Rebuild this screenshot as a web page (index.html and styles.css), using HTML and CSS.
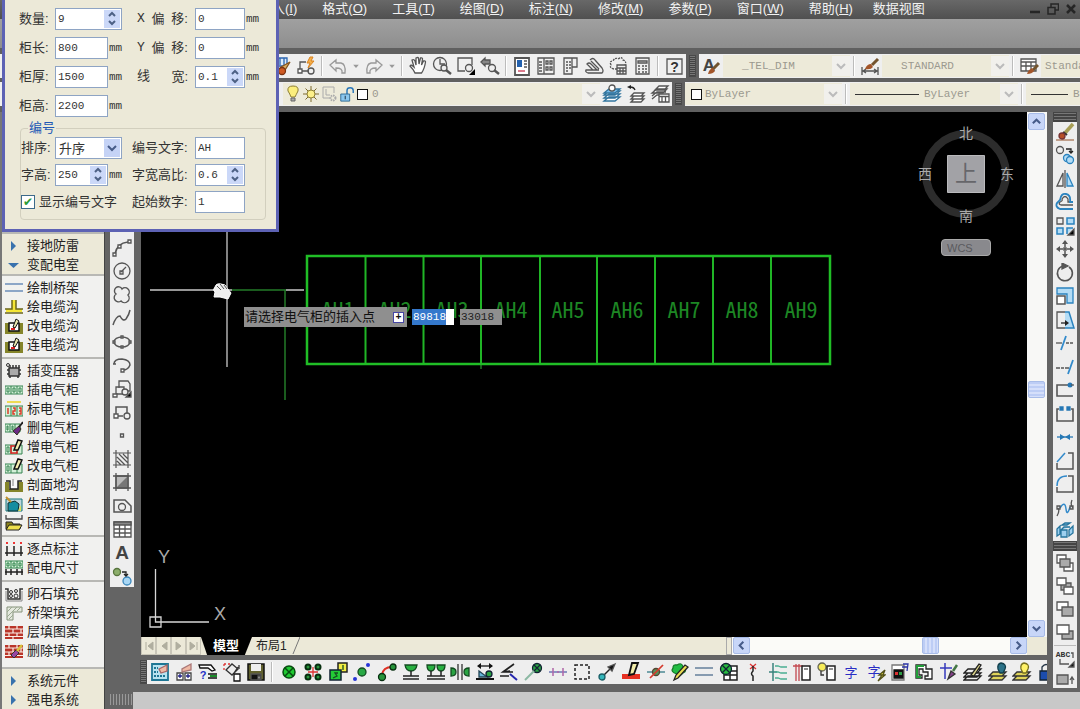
FILE: index.html
```html
<!DOCTYPE html>
<html lang="zh-CN">
<head>
<meta charset="utf-8">
<title>变配电室</title>
<link rel="stylesheet" href="styles.css">
</head>
<body>
<div class="app">
  <header class="menubar">
    <nav class="menus">
      <button>插入(<u>I</u>)</button><button>格式(<u>O</u>)</button><button>工具(<u>T</u>)</button><button>绘图(<u>D</u>)</button><button>标注(<u>N</u>)</button><button>修改(<u>M</u>)</button><button>参数(<u>P</u>)</button><button>窗口(<u>W</u>)</button><button>帮助(<u>H</u>)</button><button>数据视图</button>
    </nav>
    <div class="window-buttons">
      <button aria-label="最小化"><svg viewBox="0 0 12 12"><path d="M1 9h10" stroke-width="2.5"/></svg></button>
      <button aria-label="还原"><svg viewBox="0 0 12 12"><path d="M4 4V1h7.500v6H8M1 4.500h7v6.500H1z" stroke-width="1.500"/></svg></button>
      <button aria-label="关闭"><svg viewBox="0 0 12 12"><path d="M2 2l8 8M10 2l-8 8" stroke-width="2.500"/></svg></button>
    </div>
  </header>
  <div class="band"></div>

  <div class="toolrows">
    <div class="toolrow">
      <div class="bar bar-standard">
        <button aria-label="特性匹配"><svg viewBox="0 0 20 20"><path d="M4 2h11v8H4zM8 2v7M12 2v7" fill="#dcebfa" stroke="#2c66b0"/><path d="M9 11l9-5-5 8z" fill="#dcae62" stroke="#87561f"/><circle cx="10" cy="15" r="3.500" fill="#cf5a23" stroke="#7b3413"/></svg></button>
        <button aria-label="块编辑器"><svg viewBox="0 0 20 20"><path d="M10 6H4v9h9"/><circle cx="15" cy="15" r="3"/><path d="M2 13h4v4H2z" fill="#fff"/><path d="M14 1l-3 6h3l-2 5 6-7h-3l2-4z" fill="#f6b04b" stroke="#d98320" stroke-width="1"/></svg></button>
        <i class="sep"></i>
        <button aria-label="放弃"><svg viewBox="0 0 20 20"><path d="M2 9l6-5v3h5q5 1 4 10h-3q1-5-6-5v3z" stroke="#999"/></svg></button>
        <button class="drop" aria-label="放弃列表"><svg viewBox="0 0 20 20"><path d="M3 7h14l-7 8z" fill="#999" stroke="none"/></svg></button>
        <button aria-label="重做"><svg viewBox="0 0 20 20"><path d="M18 9l-6-5v3H7q-5 1-4 10h3q-1-5 6-5v3z" stroke="#999"/></svg></button>
        <button class="drop" aria-label="重做列表"><svg viewBox="0 0 20 20"><path d="M3 7h14l-7 8z" fill="#999" stroke="none"/></svg></button>
        <i class="sep"></i>
        <button aria-label="平移"><svg viewBox="0 0 20 20"><path d="M7 17q-1-3-5-7 1-2 4 1L4 4q2-1 3 1l1 4V2q2-1 2.500 0l.5 6 1.500-6q2-.500 2 1l-1 6 2-4q2-.500 2 1-1 7-4 11z" fill="#fff"/></svg></button>
        <button aria-label="实时缩放"><svg viewBox="0 0 20 20"><circle cx="8" cy="8" r="6.500"/><path d="M8 3v5h5"/><circle cx="12" cy="12" r="3" fill="#eee"/><path d="M14 14l5 4" stroke-width="2.500"/></svg></button>
        <button aria-label="窗口缩放"><svg viewBox="0 0 20 20"><path d="M9 15H2V2h14v7"/><circle cx="13" cy="12" r="3.500" fill="#eee"/><path d="M19 13v6h-6z" fill="#000" stroke="none"/></svg></button>
        <button aria-label="缩放上一个"><svg viewBox="0 0 20 20"><path d="M1 6l4-4v2h5v4H5v2z" fill="#888"/><circle cx="12" cy="12" r="3.500" fill="#eee"/><path d="M14 14l5 4" stroke-width="2.500"/></svg></button>
        <i class="sep"></i>
        <button aria-label="特性"><svg viewBox="0 0 20 20"><path d="M3 2h14v17H3z" fill="#fff" stroke-width="1.800"/><path d="M5 4h5v7H5z" fill="#2361ae" stroke="none"/><path d="M12 5h3M12 8h3M12 11h3"/><path d="M6 15h7" stroke="#ca3450"/></svg></button>
        <button aria-label="设计中心"><svg viewBox="0 0 20 20"><path d="M2 2h16v16H2zM8 2v16M3 6h3M3 9h3M3 12h3M3 15h3M10 5h2v3h-2zM14 5h2v3h-2zM10 11h2v3h-2zM14 11h2v3h-2z"/></svg></button>
        <button aria-label="工具选项板"><svg viewBox="0 0 20 20"><path d="M4 2h8v16H4zM12 2h5v9h-5M6 6h2M9 6h2M6 9h2M9 9h2M6 12h2M9 12h2M6 15h2"/></svg></button>
        <button aria-label="图纸集"><svg viewBox="0 0 20 20"><path d="M6 4q3-3 5 0l7 8q2 3 0 5H4q-3-1-2-3h7L3 8q2-2 4 0l6 6M7 5l8 8M9 14h6"/></svg></button>
        <button aria-label="标记集"><svg viewBox="0 0 20 20"><path d="M9 13H6q-5-1-3-4-2-4 2-4 2-4 5-2 4-3 5 1 4 1 2 5" stroke-dasharray="2 1"/><path d="M9 9h9v9H9zM9 12h9M12 12v6M15 12v6M9 15h9"/></svg></button>
        <button aria-label="计算器"><svg viewBox="0 0 20 20"><path d="M4 2h13v16H4zM6 5h9v2H6z"/><path d="M6 10h2M10 10h2M13 10h2M6 13h2M10 13h2M13 13h2M6 16h2M10 16h2M13 16h2"/></svg></button>
        <i class="sep"></i>
        <button aria-label="帮助"><svg viewBox="0 0 20 20"><path d="M3 3h15v15H3z"/><text x="10.500" y="16" class="glyph-q">?</text></svg></button>
      </div>
      <i class="grip"></i>
      <div class="bar bar-grow">
        <button aria-label="文字样式"><svg viewBox="0 0 20 20"><text x="8" y="15" class="glyph-a">A</text><path d="M18 7l-6 6" stroke="#73542e" stroke-width="3"/><path d="M7 18q1-5 5-6l2 3q-2 3-7 3z" fill="#a3552a" stroke="none"/></svg></button>
        <label class="combo combo-style"><select aria-label="文字样式"><option>_TEL_DIM</option></select><svg viewBox="0 0 12 12"><path d="M2 4l4 4 4-4"/></svg></label>
        <i class="sep"></i>
        <button aria-label="标注样式"><svg viewBox="0 0 20 20"><path d="M2 11v8M18 11v8M2 15h16M3 15l3-2M3 15l3 2M17 15l-3-2M17 15l-3 2"/><path d="M18 3l-6 6" stroke="#73542e" stroke-width="3"/><path d="M5 13q2-5 6-5l2 3q-2 3-8 2z" fill="#a3552a" stroke="none"/></svg></button>
        <label class="combo combo-style"><select aria-label="标注样式"><option>STANDARD</option></select><svg viewBox="0 0 12 12"><path d="M2 4l4 4 4-4"/></svg></label>
        <i class="sep"></i>
        <button aria-label="表格样式"><svg viewBox="0 0 20 20"><path d="M2 3h15v12H2zM2 6h15M2 10h15M7 6v9M12 6v9" fill="#fff"/><path d="M19 9l-5 5" stroke="#73542e" stroke-width="3"/><path d="M8 18q1-4 5-6l2 3q-2 3-7 3z" fill="#a3552a" stroke="none"/></svg></button>
        <label class="combo combo-table"><select aria-label="表格样式"><option>Standard</option></select></label>
      </div>
    </div>

    <div class="toolrow">
      <div class="bar bar-layer">
        <div class="combo combo-layer">
          <svg viewBox="0 0 16 18"><path d="M8 1q6 0 5 5-2 4-3 6H6Q5 9 3 6 2 1 8 1z" fill="#fbee7c" stroke="#8d7f34"/><path d="M6 13h4v3H6z" fill="#aaa"/></svg>
          <svg viewBox="0 0 16 18"><path d="M8 1v16M0 9h16M2.500 3.500l11 11M13.500 3.500l-11 11" stroke="#7d6b2e"/><circle cx="8" cy="9" r="4" fill="#fdf08a" stroke="#8d7f34"/></svg>
          <svg viewBox="0 0 16 18"><path d="M9 13H2V2h11v6M5 4v6h4" stroke="#aaa"/><circle cx="12" cy="13" r="2.500" stroke="#aaa" stroke-width="2" stroke-dasharray="1.500 .8"/></svg>
          <svg viewBox="0 0 18 18"><path d="M9 9V5q0-3 3.500-3T16 5v3" stroke="#2775b8" stroke-width="1.600"/><path d="M2 9h10v8H2z" fill="#8bc7ee" stroke="#28648f"/><path d="M7 11v4" stroke="#123"/></svg>
          <span class="swatch"></span>
          <select aria-label="图层"><option>0</option></select>
          <svg class="chev" viewBox="0 0 12 12"><path d="M2 4l4 4 4-4"/></svg>
        </div>
        <button aria-label="图层置为当前"><svg viewBox="0 0 20 20"><path d="M2 17l5-4h11l-5 4zM2 14l5-4h11l-5 4zM2 11l5-4h11l-5 4z" fill="#fff" stroke="#31749e"/><path d="M2 9l5-4h11l-5 4z" fill="#78bdec" stroke="#31749e"/><circle cx="10" cy="4" r="3" fill="#fff"/></svg></button>
        <button aria-label="上一个图层"><svg viewBox="0 0 20 20"><path d="M5 18l3-3h10l-3 3zM5 15l3-3h10l-3 3zM5 12l3-3h10l-3 3z" fill="#fff"/><path d="M9 6q-1-3-5-3" stroke="#222"/><path d="M1 3l4-2v4z" fill="#222" stroke="none"/></svg></button>
        <button aria-label="图层状态管理器"><svg viewBox="0 0 20 20"><path d="M2 15l5-4h8M2 12l5-4h9M2 9l5-4h10l-4 4zM5 6l4-4h9l-4 4z" fill="#fff"/><path d="M9 10h10v8H9zM9 12.500h10M12 13v5M15.500 13v5" fill="#fff"/></svg></button>
      </div>
      <i class="grip"></i>
      <div class="bar bar-grow">
        <label class="combo combo-color"><span class="swatch"></span><select aria-label="颜色"><option>ByLayer</option></select><svg viewBox="0 0 12 12"><path d="M2 4l4 4 4-4"/></svg></label>
        <i class="sep"></i>
        <label class="combo combo-line"><span class="rule"></span><select aria-label="线型"><option>ByLayer</option></select><svg viewBox="0 0 12 12"><path d="M2 4l4 4 4-4"/></svg></label>
        <i class="sep"></i>
        <label class="combo combo-weight"><span class="rule"></span><select aria-label="线宽"><option>ByLayer</option></select></label>
      </div>
    </div>
  </div>

  <div class="body">
    <aside class="sidebar">
      <ul class="cream first">
        <li><svg viewBox="0 0 18 16"><path d="M6 3l5 5-5 5z" fill="#3972ad"/></svg>接地防雷</li>
        <li><svg viewBox="0 0 18 16"><path d="M3 6h11l-5.500 5z" fill="#3972ad"/></svg>变配电室</li>
      </ul>
      <ul>
        <li><svg viewBox="0 0 18 16"><path d="M0 4h18M0 11h18" stroke="#6b8dbb" stroke-width="1.300"/></svg>绘制桥架</li>
        <li><svg viewBox="0 0 18 16"><path d="M7 1v9H1v3h16v-3h-6V1" fill="#f5e635"/><path d="M7 1v9H0M11 1v9h7M0 14h18" stroke="#6b651b" stroke-width="1.500"/></svg>绘电缆沟</li>
        <li><svg viewBox="0 0 18 16"><path d="M0 5h18v11H0z" fill="#85852a"/><path d="M4 5h10v8H4z" fill="#fff" stroke="#111" stroke-width="1.500"/><path d="M6 11h3V8" stroke="#d22" stroke-width="2"/><path d="M8 9l3-8 3 2-4 7z" fill="#e9e5ad" stroke="#111"/></svg>改电缆沟</li>
        <li><svg viewBox="0 0 18 16"><path d="M0 5h18v11H0z" fill="#85852a"/><path d="M4 5h10v8H4z" fill="#fff" stroke="#111" stroke-width="1.500"/><path d="M6 11h3V8" stroke="#d22" stroke-width="2"/><path d="M8 9l3-8 3 2-4 7z" fill="#e9e5ad" stroke="#111"/></svg>连电缆沟</li>
      </ul>
      <ul>
        <li><svg viewBox="0 0 18 16"><path d="M4 5h10v8H4z" fill="#aaa" stroke="#333" stroke-width="1.500"/><path d="M5 2v3M8 2v3M11 2v3M14 2v3M2 7h2M2 11h2M14 7h2M14 11h2M5 13v2M13 13v2" stroke="#333" stroke-width="1.500"/><circle cx="3" cy="2" r="1.500" stroke="#333"/></svg>插变压器</li>
        <li><svg viewBox="0 0 18 16"><path d="M0 4h18v8H0zM6 4v8M12 4v8M2 6h2v4H2zM8 6h2v4H8zM14 6h2v4h-2z" fill="#d4f0d8" stroke="#348251"/></svg>插电气柜</li>
        <li><svg viewBox="0 0 18 16"><path d="M2 1h14" stroke="#eedb55" stroke-width="2"/><path d="M0 5h18v10H0zM6 5v10M12 5v10" fill="#d4f0d8" stroke="#348251"/><path d="M3 7v6M8 7h2v3H8v3h2M14 7h2v6h-2M14 10h2" stroke="#dc3b29" stroke-width="1.500"/></svg>标电气柜</li>
        <li><svg viewBox="0 0 18 16"><path d="M0 4h15v8H0zM5 4v8M10 4v8M2 6h1v4H2zM7 6h1v4H7z" fill="#d4f0d8" stroke="#348251"/><path d="M8 11l6-5 2 3-4 6z" fill="#6c2b86" stroke="#332"/><path d="M14 7l4-5" stroke="#222" stroke-width="2"/></svg>删电气柜</li>
        <li><svg viewBox="0 0 18 16"><path d="M0 6h17v9H0zM6 6v9M12 6v9M2 8h2v5H2z" fill="#d4f0d8" stroke="#348251"/><path d="M6 7h6v7H6z" stroke="#d22" stroke-width="1.500"/><path d="M9 11l4-10 4 1-4 9z" fill="#f5eeb0" stroke="#111" stroke-width="1.500"/></svg>增电气柜</li>
        <li><svg viewBox="0 0 18 16"><path d="M0 6h17v9H0zM6 6v9M12 6v9M2 8h2v5H2z" fill="#d4f0d8" stroke="#348251"/><path d="M9 11l4-10 4 1-4 9z" fill="#f5eeb0" stroke="#111" stroke-width="1.500"/></svg>改电气柜</li>
        <li><svg viewBox="0 0 18 16"><path d="M0 5h18v10H0z" fill="#85852a"/><path d="M4 3h9v9H4z" fill="#f8f8f8"/><path d="M1 4h4v8h8V4h4" stroke="#222" stroke-width="1.500"/><path d="M8 2v7" stroke="#aaa" stroke-width="1.500"/></svg>剖面地沟</li>
        <li><svg viewBox="0 0 18 16"><path d="M1 3h16v12H1z" fill="#bcd6df" stroke="#18767b"/><path d="M3 7l7-2 4 3-1 7H3z" fill="#168da1" stroke="#133"/><path d="M1 1l5 5" stroke="#c39130" stroke-width="2"/><path d="M13 15l3-6v6z" fill="#dce35a"/></svg>生成剖面</li>
        <li><svg viewBox="0 0 18 16"><path d="M1 0v4h16V0" stroke="#444" stroke-width="1.300"/><path d="M1 7h6l1 2h7v5H1z" fill="#8a821c" stroke="#222"/><path d="M4 10h13l-3 5H1z" fill="#eddf4c" stroke="#222"/></svg>国标图集</li>
      </ul>
      <ul>
        <li><svg viewBox="0 0 18 16"><path d="M2 5v10M9 5v10M16 5v10M0 12h18" stroke="#222" stroke-width="1.500"/><path d="M1 1h2v2H1zM8 1h2v2H8zM15 1h2v2h-2z" fill="#e33"/></svg>逐点标注</li>
        <li><svg viewBox="0 0 18 16"><path d="M0 1h18v7H0zM6 1v7M12 1v7M2 3h2v3H2zM8 3h2v3H8zM14 3h2v3h-2z" fill="#d4f0d8" stroke="#298046"/><path d="M1 9v6M6 9v6M12 9v6M17 9v6M0 12h18" stroke="#222" stroke-width="1.500"/></svg>配电尺寸</li>
      </ul>
      <ul>
        <li><svg viewBox="0 0 18 16"><path d="M0 3h3v10h12V3h3" stroke="#333" stroke-width="1.500"/><path d="M1 5v10h16V5" stroke="#888"/><circle cx="6" cy="6" r="1.500" stroke="#333"/><circle cx="11" cy="5" r="1.500" stroke="#333"/><circle cx="6" cy="10" r="1.500" stroke="#333"/><circle cx="11" cy="10" r="2" stroke="#333"/></svg>卵石填充</li>
        <li><svg viewBox="0 0 18 16"><path d="M2 2h15v5H8v8H2z" fill="#e5e9df" stroke="#85927a"/><path d="M2 7l5-5M2 12L12 2M4 14l4-4M12 6l4-4" stroke="#9ba991"/></svg>桥架填充</li>
        <li><svg viewBox="0 0 18 16"><path d="M0 2h18v13H0z" fill="#b93529"/><path d="M0 5h18M0 9h18M0 12.500h18M4 2v3M12 2v3M8 5v4M16 5v4M4 9v3M12 9v3M8 13v2" stroke="#fbeee6" stroke-width="1.200"/></svg>层填图案</li>
        <li><svg viewBox="0 0 18 16"><path d="M0 2h18v13H0z" fill="#b93529"/><path d="M0 5h18M0 9h18M0 12.500h18M4 2v3M12 2v3M8 5v4M16 5v4M4 9v3" stroke="#fbeee6" stroke-width="1.200"/><path d="M6 12l5-5 3 3-5 5z" fill="#9745a2" stroke="#333"/><path d="M12 8l5-6" stroke="#d8c33e" stroke-width="2.500"/></svg>删除填充</li>
      </ul>
      <ul class="cream last">
        <li><svg viewBox="0 0 18 16"><path d="M6 3l5 5-5 5z" fill="#3972ad"/></svg>系统元件</li>
        <li><svg viewBox="0 0 18 16"><path d="M6 3l5 5-5 5z" fill="#3972ad"/></svg>强电系统</li>
      </ul>
    </aside>

    <div class="stage">
      <div class="work">
        <div class="vbar vbar-draw">
          <button aria-label="多段线"><svg viewBox="0 0 20 20"><path d="M3 16q2-11 13-12" stroke-width="1.600"/><path d="M1 15h3v3H1zM6 7h3v3H6zM16 2h3v3h-3z" fill="#fff"/></svg></button>
          <button aria-label="圆"><svg viewBox="0 0 20 20"><circle cx="10" cy="10" r="8"/><path d="M9 11l5-5M8 10h3v3H8z"/></svg></button>
          <button aria-label="修订云线"><svg viewBox="0 0 20 20"><path d="M10 4a4 4 0 1 0-6 5 4 4 0 1 0 5 7 4 4 0 1 0 7-6 4 4 0 1 0-6-6z" stroke-width="1.400"/></svg></button>
          <button aria-label="样条曲线"><svg viewBox="0 0 20 20"><path d="M1 17q3-9 7-9 3 6 6 3 3-4 4-9" stroke-width="1.500"/></svg></button>
          <button aria-label="椭圆"><svg viewBox="0 0 20 20"><ellipse cx="10" cy="10" rx="8" ry="5" stroke-width="1.500"/><path d="M1 9h2v2H1zM9 4h2v2H9zM17 9h2v2h-2zM9 14h2v2H9z" fill="#fff"/></svg></button>
          <button aria-label="椭圆弧"><svg viewBox="0 0 20 20"><path d="M2 9q0-5 8-5 8 1 8 6-2 5-7 5" stroke-width="1.500"/><path d="M1 9h3M9 14h3v3H9z" fill="#fff"/></svg></button>
          <button aria-label="插入块"><svg viewBox="0 0 20 20"><path d="M7 9V2h9l2 3v7h-4M4 8h8v7H4z" fill="#eee"/><path d="M1 15h4v3H1z" fill="#fff"/><circle cx="13" cy="13" r="3" fill="#eee"/><path d="M19 13v5h-5z" fill="#000"/></svg></button>
          <button aria-label="创建块"><svg viewBox="0 0 20 20"><path d="M4 14V5h11v6M4 14h7" stroke-width="1.500"/><circle cx="15" cy="14" r="3"/><path d="M2 12h4v4H2z" fill="#fff"/></svg></button>
          <button aria-label="点"><svg viewBox="0 0 20 20"><path d="M8.500 9h3v3h-3z"/></svg></button>
          <button aria-label="图案填充"><svg viewBox="0 0 20 20"><path d="M4 1v18M16 1v18M1 4h18M1 16h18M5 8l8 8M5 12l4 4M7 5l9 9M11 5l5 5" stroke-width="1.200"/></svg></button>
          <button aria-label="渐变色"><svg viewBox="0 0 20 20"><path d="M4 4h12v12H4z" fill="#bbb"/><path d="M5 15L15 5v10z" fill="#777" stroke="none"/><path d="M4 1v18M16 1v18M1 4h18M1 16h18"/></svg></button>
          <button aria-label="面域"><svg viewBox="0 0 20 20"><path d="M2 4h11l6 6v6H2z" stroke-width="1.500"/><circle cx="10" cy="11" r="3.500"/></svg></button>
          <button aria-label="表格"><svg viewBox="0 0 20 20"><path d="M2 3h17v15H2z" fill="#fff"/><path d="M2 3h17v3H2z" fill="#888"/><path d="M2 10h17M2 14h17M7.500 6v12M13 6v12"/></svg></button>
          <button aria-label="多行文字"><svg viewBox="0 0 20 20"><text x="10" y="17" class="glyph-text">A</text></svg></button>
          <button aria-label="添加选定对象"><svg viewBox="0 0 20 20"><circle cx="5" cy="6" r="3.500" fill="#8cae6b" stroke="#58743e"/><circle cx="15" cy="15" r="4" fill="#a9d7f4" stroke="#3a86bb"/><path d="M10 6h4v4M12 8l2 2 2-2" stroke="#222"/></svg></button>
        </div>

        <main class="center">
          <div class="view">
            <div class="canvas">
              <svg class="drawing" viewBox="0 0 720 300" width="720" height="300">
                <path d="M91 178h54M144 178v110M340 247v10M335 252h10" stroke="#237b29" stroke-width="1.500"/>
                <path d="M224.500 144v108M282.500 144v108M340 144v108M399 144v108M456 144v108M514 144v108M572 144v108M630 144v108" stroke="#20b526" stroke-width="2"/>
                <path d="M166 144h523v108H166z" stroke="#20bd26" stroke-width="2.500"/>
                <g class="cab">
                  <text x="197" y="206">AH1</text><text x="254" y="206">AH2</text><text x="311" y="206">AH3</text><text x="370" y="206">AH4</text><text x="427" y="206">AH5</text><text x="486" y="206">AH6</text><text x="543" y="206">AH7</text><text x="601" y="206">AH8</text><text x="660" y="206">AH9</text>
                </g>
                <path d="M9 178h82M145 178h18M86 120v135" stroke="#c8c8c8" stroke-width="1.300"/>
                <path d="M74 180q-3-2 0-5 1-4 6-3 5 0 6 4l4 5-3 6-8-2-6 0z" fill="#eee" stroke="#fff"/>
                <path d="M76 174l4 4M79 172l4 5M83 173l3 4" stroke="#555"/>
              </svg>
              <div class="prompt">
                <span>请选择电气柜的插入点<b>+</b></span>
                <input class="active" value="89818" aria-label="X 坐标"><input value="33018" aria-label="Y 坐标">
              </div>
              <svg class="ucs" viewBox="0 0 90 90" width="90" height="90">
                <path d="M14.500 22v53H68M9 70h11v10H9z" stroke="#d6d6d6" stroke-width="1.300"/>
                <text x="23" y="16">Y</text><text x="79" y="73">X</text>
              </svg>
              <div class="cube">
                <svg viewBox="0 0 100 106" width="100" height="106">
                  <circle cx="50" cy="55" r="40" stroke="#2c2c2c" stroke-width="8"/>
                  <path d="M31.500 36.500h37v37h-37z" fill="#a2a2a6" stroke="#bababd"/>
                  <text x="50" y="19">北</text><text x="9" y="60">西</text><text x="91" y="60">东</text><text x="50" y="102">南</text>
                  <text x="50" y="62" class="top">上</text>
                </svg>
                <button>WCS</button>
              </div>
            </div>
            <div class="vscroll">
              <button aria-label="向上滚动"><svg viewBox="0 0 12 12"><path d="M2 8l4-4 4 4"/></svg></button>
              <i class="space a"></i><i class="thumb"></i><i class="space b"></i>
              <button aria-label="向下滚动"><svg viewBox="0 0 12 12"><path d="M2 4l4 4 4-4"/></svg></button>
            </div>
          </div>
          <div class="tabs">
            <div class="tabnav">
              <button aria-label="第一个"><svg viewBox="0 0 12 12"><path d="M3 2v8" /><path d="M10 2v8L5 6z"/></svg></button><button aria-label="上一个"><svg viewBox="0 0 12 12"><path d="M9 2v8L4 6z"/></svg></button><button aria-label="下一个"><svg viewBox="0 0 12 12"><path d="M3 2v8l5-4z"/></svg></button><button aria-label="最后一个"><svg viewBox="0 0 12 12"><path d="M2 2v8l5-4zM9 2v8"/></svg></button>
            </div>
            <button class="tab on">模型</button>
            <button class="tab">布局1<svg viewBox="0 0 8 18"><path d="M8 0L1 17"/></svg></button>
            <div class="hscroll">
              <i class="split"></i>
              <button aria-label="向左滚动"><svg viewBox="0 0 12 12"><path d="M8 2L4 6l4 4"/></svg></button>
              <i class="space c"></i><i class="thumb"></i><i class="space d"></i>
              <button aria-label="向右滚动"><svg viewBox="0 0 12 12"><path d="M4 2l4 4-4 4"/></svg></button>
            </div>
          </div>
          <div class="bottomrow">
            <i class="grip"></i>
            <div class="bottombar">
              <div class="group">
                <button aria-label="初始设置"><svg viewBox="0 0 20 20"><path d="M2 2h16v16H2z" fill="#b8e2ef" stroke="#1e7694" stroke-width="1.800"/><path d="M4 6h4M4 10h4M4 14h12" stroke="#1e7694" stroke-width="2" stroke-dasharray="2 1"/><path d="M17 3l-8 4 2 4 6-2z" fill="#f0b9a4" stroke="#a66"/></svg></button>
                <button aria-label="工具条"><svg viewBox="0 0 20 20"><path d="M3 11h6v7H3zM11 11h6v7h-6z" fill="#fff" stroke="#444"/><path d="M6 12v4M4 14h4M12 14h4M14 12v4" stroke="#228"/><path d="M17 2l-9 5v3l9-2z" fill="#f0b9a4" stroke="#a77"/></svg></button>
                <button aria-label="查询"><svg viewBox="0 0 20 20"><path d="M1 3h12l4 5-3 1-4-3H2z" fill="#fff" stroke="#111"/><path d="M10 12h9M10 16h9" stroke="#111" stroke-width="1.500"/><path d="M12 14h7" stroke="#1a8d2a" stroke-width="2"/><text x="5" y="17" class="qmark">?</text></svg></button>
                <button aria-label="对象选择"><svg viewBox="0 0 20 20"><path d="M2 2h8M2 2v8" stroke="#d33" stroke-dasharray="2 2"/><path d="M4 8l6-6 6 5-6 6zM17 3v4M16 5l-4 6" stroke="#333"/><path d="M12 12h6v7h-6z" fill="#fff" stroke="#111"/></svg></button>
                <button aria-label="保存"><svg viewBox="0 0 20 20"><path d="M2 2h16v16H2z" fill="#61612e" stroke="#111" stroke-width="1.500"/><path d="M5 2h10v7H5z" fill="#eee" stroke="none"/><path d="M5 12h10v6H5z" fill="#111"/><path d="M12 14h2v3h-2z" fill="#eee"/></svg></button>
              </div>
              <i class="sep"></i>
              <div class="group grow">
                <button aria-label="灯具"><svg viewBox="0 0 20 20"><circle cx="10" cy="10" r="6" fill="#20ca32" stroke="#074c10" stroke-width="1.500"/><path d="M6 6l8 8M14 6l-8 8" stroke="#074c10" stroke-width="1.500"/></svg></button>
                <button aria-label="矩形布置"><svg viewBox="0 0 20 20"><path d="M5 10h10M10 5v10" stroke="#d33"/><g fill="#27943b" stroke="#082f10" stroke-width="2"><circle cx="5" cy="5" r="2.500"/><circle cx="15" cy="5" r="2.500"/><circle cx="5" cy="15" r="2.500"/><circle cx="15" cy="15" r="2.500"/></g></svg></button>
                <button aria-label="替换"><svg viewBox="0 0 20 20"><path d="M10 1h9v9h-9z" fill="#f2ed45" stroke="#222" stroke-width="1.500"/><path d="M2 8h11v10H2z" fill="#23cb36" stroke="#123" stroke-width="1.500"/><path d="M15 3v5M5 16l4-2-2-3h3" stroke="#174d20"/></svg></button>
                <button aria-label="两点均布"><svg viewBox="0 0 20 20"><circle cx="10" cy="10" r="4" fill="#28a844" stroke="#134b20"/><circle cx="16" cy="3" r="2" fill="#2633d7" stroke="none"/><circle cx="3" cy="17" r="2" fill="#2633d7" stroke="none"/></svg></button>
                <button aria-label="弧线均布"><svg viewBox="0 0 20 20"><path d="M5 13q1-8 10-8" stroke="#df3025" stroke-width="2"/><circle cx="16" cy="5" r="3" fill="#27943b" stroke="#082f10"/><circle cx="5" cy="15" r="3.500" fill="#27943b" stroke="#082f10"/></svg></button>
                <button aria-label="插座"><svg viewBox="0 0 20 20"><path d="M4 3q1 6 6 6t6-6z" fill="#29b142" stroke="#134b20"/><path d="M10 9v5M2 14h16M2 17h16" stroke="#222" stroke-width="1.500"/></svg></button>
                <button aria-label="双插座"><svg viewBox="0 0 20 20"><path d="M1 3q0 6 4 6t4-6zM11 3q0 6 4 6t4-6z" fill="#29b142" stroke="#134b20"/><path d="M5 9v5M15 9v5M1 14h18M1 17h18" stroke="#222" stroke-width="1.500"/></svg></button>
                <button aria-label="对齐"><svg viewBox="0 0 20 20"><path d="M1 6q5 0 5 4t-5 4zM19 6q-5 0-5 4t5 4z" fill="#29a442" stroke="#134b20"/><path d="M8 2v16M12 2v16" stroke="#333"/></svg></button>
                <button aria-label="定距"><svg viewBox="0 0 20 20"><path d="M4 4h13" stroke="#111"/><path d="M2 4l4-3v6zM18 4l-4-3v6z" fill="#111" stroke="none"/><path d="M1 17h18" stroke="#111" stroke-width="2"/><path d="M4 9l8 6H4z" fill="#66b5d8" stroke="#245"/><circle cx="14" cy="12" r="3" fill="#29a442" stroke="#123"/></svg></button>
                <button aria-label="开关"><svg viewBox="0 0 20 20"><path d="M15 2L4 10h10M4 10l7-1M1 14h9" stroke="#222" stroke-width="1.700"/><path d="M11 12l7 6" stroke="#2526ad" stroke-width="2"/></svg></button>
                <button aria-label="引线"><svg viewBox="0 0 20 20"><circle cx="14" cy="6" r="4.500" fill="#29a442" stroke="#123"/><path d="M11 3l6 6M17 3l-6 6" stroke="#123"/><path d="M11 9l-9 9" stroke="#8bb8a2" stroke-width="2"/></svg></button>
                <button aria-label="布线"><svg viewBox="0 0 20 20"><path d="M1 10h18" stroke="#6b77b4" stroke-width="1.500"/><path d="M5 6v8M15 6v8M10 9v2" stroke="#b066a8" stroke-width="1.500"/></svg></button>
                <button aria-label="框选"><svg viewBox="0 0 20 20"><path d="M3 3h14v14H3z" stroke="#222" stroke-dasharray="3 2" stroke-width="1.500"/></svg></button>
                <button aria-label="引出"><svg viewBox="0 0 20 20"><path d="M7 13l8-8" stroke="#222" stroke-width="1.500"/><path d="M18 2l-7 3 4 4z" fill="#111"/><circle cx="5" cy="15" r="3" fill="#35b7ba" stroke="#185e66"/></svg></button>
                <button aria-label="改线"><svg viewBox="0 0 20 20"><path d="M1 12h18v5H1z" fill="#e63022" stroke="none"/><path d="M8 13l3-12h6l-4 11z" fill="#f2edaa" stroke="#111" stroke-width="1.800"/></svg></button>
                <button aria-label="断线"><svg viewBox="0 0 20 20"><path d="M1 10h18" stroke="#4c8a94" stroke-width="1.500"/><circle cx="10" cy="10" r="3.500" fill="#57935b" stroke="#543"/><path d="M4 16L17 3" stroke="#d5392d" stroke-width="1.700"/></svg></button>
                <button aria-label="编辑设备"><svg viewBox="0 0 20 20"><path d="M7 3q5-3 6 2 5 4 0 6-5 5-6 1-7-2-4-6 0-4 4-3z" fill="#21bd43" stroke="#147c29"/><path d="M4 18l2-5 9-10 3 2L8 16z" fill="#eadc52" stroke="#222" stroke-width="1.300"/></svg></button>
                <button aria-label="平行线"><svg viewBox="0 0 20 20"><path d="M1 6h18M1 13h18" stroke="#879bb0" stroke-width="1.800"/></svg></button>
                <button aria-label="材料表"><svg viewBox="0 0 20 20"><path d="M5 4h13v14H5zM5 9h13M5 13h13M11 4v14" fill="#fff" stroke="#222" stroke-width="1.500"/><circle cx="7" cy="7" r="5.500" fill="#27bb3e" stroke="#123"/><path d="M3 3l8 8M11 3l-8 8" stroke="#123"/></svg></button>
                <button aria-label="断开"><svg viewBox="0 0 20 20"><path d="M7 2l6 5M13 2L7 7" stroke="#d33"/><path d="M10 4v5q-3 3 0 5v5" stroke="#222" stroke-width="1.500"/></svg></button>
                <button aria-label="系统图"><svg viewBox="0 0 20 20"><path d="M5 1v18M1 10h8" stroke="#3a837d" stroke-width="1.500"/><path d="M7 4h3l3 1h6M7 10h3l3 1h6M7 16h3l3 1h6" stroke="#4aae92" stroke-width="1.300"/></svg></button>
                <button aria-label="回路"><svg viewBox="0 0 20 20"><path d="M1 4h10M4 2v17M7 2v17" stroke="#c34950"/><path d="M10 4h8v14h-8z" fill="#fff" stroke="#222" stroke-width="1.500"/><path d="M12 7h4" stroke="#555"/></svg></button>
                <button aria-label="照明"><svg viewBox="0 0 20 20"><circle cx="5" cy="5" r="4" fill="#f7ec58" stroke="#665"/><path d="M4 9v4h3" stroke="#333"/><path d="M10 4h8v14h-8z" fill="#fff" stroke="#222" stroke-width="1.500"/><path d="M12 7h4" stroke="#555"/></svg></button>
                <button aria-label="文字"><svg viewBox="0 0 20 20"><text x="10" y="15" class="zi">字</text></svg></button>
                <button aria-label="快速文字"><svg viewBox="0 0 20 20"><text x="8" y="14" class="zi">字</text><path d="M19 8l-6 5h3l-4 6 7-6h-2z" fill="#d7cf3b" stroke="#54521a"/></svg></button>
                <button aria-label="图块"><svg viewBox="0 0 20 20"><path d="M2 3h12v15H2z" fill="#fff" stroke="#777"/><path d="M4 8h9v8H4z" fill="#111" stroke="#111"/><path d="M5 10h3v3H5z" fill="#d33" stroke="none"/><path d="M9 10h3v3H9z" fill="#2b9b45" stroke="none"/><path d="M13 2h5l-1 7M12 5h6" stroke="#2d35a6"/></svg></button>
                <button aria-label="房间"><svg viewBox="0 0 20 20"><path d="M2 3h10v4h6v10h-7v-3h3v-4H9V7H5v6h3v3H2z" fill="#fff" stroke="#222" stroke-width="1.300"/><path d="M10 4H3v11h4" stroke="#219d39" stroke-width="2"/></svg></button>
                <button aria-label="画笔"><svg viewBox="0 0 20 20"><path d="M1 6h12M6 1v16" stroke="#363abc" stroke-width="1.500"/><path d="M9 17l3-8 4 3z" fill="#86418c" stroke="#333"/><path d="M14 9l4-6" stroke="#474" stroke-width="2.500"/></svg></button>
                <button aria-label="图层编辑"><svg viewBox="0 0 20 20"><path d="M1 15l4-4h13l-4 4zM1 11l4-4h13l-4 4zM1 18l4-4h13l-4 4z" fill="#eee" stroke="#222"/><path d="M8 13l8-11 2 1-7 11z" fill="#ddd68b" stroke="#222"/></svg></button>
                <button aria-label="关闭图层"><svg viewBox="0 0 20 20"><path d="M1 14l4-4h13l-4 4zM1 18l4-4h13l-4 4z" fill="#dfd45a" stroke="#333"/><path d="M13 1q6 1 4 6l-2 4h-3l-2-4q-1-5 3-6z" fill="#2b7187" stroke="#123e4b"/></svg></button>
                <button aria-label="打开图层"><svg viewBox="0 0 20 20"><path d="M1 14l4-4h13l-4 4zM1 18l4-4h13l-4 4z" fill="#dfd45a" stroke="#333"/><path d="M12 1q6 1 4 6l-2 4h-3L9 7q-1-5 3-6z" fill="#fff267" stroke="#777021"/></svg></button>
                <button aria-label="锁定图层"><svg viewBox="0 0 20 20"><path d="M5 9V5q4-5 8 0v4" stroke="#234"/><path d="M3 9h12v9H3z" fill="#1c4cac" stroke="#123"/></svg></button>
              </div>
            </div>
          </div>
        </main>

        <div class="rightdock">
          <i class="hgrip"></i>
          <div class="vbar vbar-modify">
            <button aria-label="删除"><svg viewBox="0 0 20 20"><path d="M1 18h18" stroke="#a87455"/><path d="M18 2l-8 9" stroke="#a79e55" stroke-width="3.500"/><path d="M8 10l4 3" stroke="#333" stroke-width="2"/><circle cx="7" cy="14" r="3" fill="#b64e25" stroke="#733"/></svg></button>
            <button aria-label="复制"><svg viewBox="0 0 20 20"><circle cx="5" cy="5" r="3.500"/><circle cx="12" cy="13" r="3.500" fill="#b4dcf5" stroke="#2a83bf"/><circle cx="15" cy="15" r="3.500" fill="#b4dcf5" stroke="#2a83bf"/><path d="M11 4h5v4M14 6l2 2 2-2" stroke="#222"/></svg></button>
            <button aria-label="镜像"><svg viewBox="0 0 20 20"><path d="M8 4v13H2zM10 1v18"/><path d="M12 4v13h6z" fill="#b4dcf5" stroke="#2a83bf"/></svg></button>
            <button aria-label="偏移"><svg viewBox="0 0 20 20"><path d="M18 13H6q-3-1-1-3 3-1 2-3 3-5 6 0v3h5"/><path d="M18 17H5q-5-2-3-6l3-3q1-7 6-6 5 1 4 8h3" stroke="#2a83bf" stroke-width="1.800"/></svg></button>
            <button aria-label="阵列"><svg viewBox="0 0 20 20"><path d="M2 2h6v6H2z"/><path d="M12 2h7v6h-7zM2 12h6v6H2zM12 18v-6h6" fill="#b4dcf5" stroke="#2a83bf" stroke-width="1.500"/><path d="M19 13v6h-6z" fill="#000"/></svg></button>
            <button aria-label="移动"><svg viewBox="0 0 20 20"><path d="M10 1l3 4H7zM10 19l3-4H7zM1 10l4-3v6zM19 10l-4-3v6z" fill="#555" stroke="none"/><path d="M10 5v3M10 12v3M5 10h3M12 10h3M9 9h2v2H9z" stroke-width="1.500"/></svg></button>
            <button aria-label="旋转"><svg viewBox="0 0 20 20"><path d="M8 3a7.500 7.500 0 1 0 6 1" stroke-width="1.600"/><path d="M7 0l6 3-6 3z" fill="#555"/></svg></button>
            <button aria-label="缩放"><svg viewBox="0 0 20 20"><path d="M2 2h16v15h-6V8H2z" fill="#b4dcf5" stroke="#2a83bf"/><path d="M2 10h8v8H2z" fill="#fff" stroke-width="1.500"/></svg></button>
            <button aria-label="拉伸"><svg viewBox="0 0 20 20"><path d="M10 2h4l5 16h-9" fill="#b4dcf5" stroke="#2a83bf" stroke-width="1.500"/><path d="M10 2H2v16h8"/><path d="M6 13h5" stroke="#222"/><path d="M10 10l4 3-4 3z" fill="#222" stroke="none"/></svg></button>
            <button aria-label="修剪"><svg viewBox="0 0 20 20"><path d="M1 10h6"/><path d="M11 10h8" stroke-dasharray="3 1"/><path d="M6 17l5-14" stroke="#328acb" stroke-width="1.800"/></svg></button>
            <button aria-label="延伸"><svg viewBox="0 0 20 20"><path d="M1 11h4M6 11h3M10 11h4"/><path d="M13 17l5-14" stroke="#328acb" stroke-width="1.800"/></svg></button>
            <button aria-label="打断于点"><svg viewBox="0 0 20 20"><path d="M18 16H2V5h11" stroke-width="1.600"/><circle cx="15" cy="5" r="2.500" fill="#2678b5" stroke="none"/><path d="M16 5h3"/></svg></button>
            <button aria-label="打断"><svg viewBox="0 0 20 20"><path d="M4 5H2v12h16V5h-2" stroke-width="1.600"/><path d="M5 3h3v3H5zM12 3h3v3h-3z" fill="#2678b5" stroke="#2678b5"/></svg></button>
            <button aria-label="合并"><svg viewBox="0 0 20 20"><path d="M2 10h16" stroke="#2678b5"/><path d="M5 7l5 3-5 3zM15 7l-5 3 5 3z" fill="#2678b5" stroke="none"/></svg></button>
            <button aria-label="倒角"><svg viewBox="0 0 20 20"><path d="M13 2h5v16H2v-6" stroke-width="1.500"/><path d="M2 11l8-9" stroke="#328acb" stroke-width="1.500"/></svg></button>
            <button aria-label="圆角"><svg viewBox="0 0 20 20"><path d="M13 2h5v16H2v-5" stroke-width="1.500"/><path d="M2 12Q2 2 12 2" stroke="#328acb" stroke-width="1.500"/></svg></button>
            <button aria-label="光顺曲线"><svg viewBox="0 0 20 20"><path d="M5 10q5-8 6 1 1 8 4-2" stroke="#328acb" stroke-width="1.500"/><path d="M2 18q3-5 1-8M17 2q-2 5 1 8M2 8h3v3H2zM15 8h3v3h-3z"/></svg></button>
            <button aria-label="分解"><svg viewBox="0 0 20 20"><path d="M2 8l3-3v8l-3 2zM6 9h6v7H6zM7 4h5l3-2h-5zM14 9l4-4v7l-4 3zM6 9l3-3h6" fill="#9dd0ef" stroke="#25749d"/></svg></button>
          </div>
          <i class="hgrip"></i>
          <div class="vbar vbar-order">
            <button aria-label="前置"><svg viewBox="0 0 20 20"><path d="M2 2h9v8H2zM9 10h9v8H9z" fill="#fff"/><path d="M5 6h10v8H5z" fill="#aaa"/></svg></button>
            <button aria-label="后置"><svg viewBox="0 0 20 20"><path d="M6 7h10v7H6z" fill="#aaa"/><path d="M2 2h9v7H2zM9 11h9v7H9z" fill="#fff"/></svg></button>
            <button aria-label="置于对象之上"><svg viewBox="0 0 20 20"><path d="M2 3h11v8H2z" fill="#fff"/><path d="M7 8h11v9H7z" fill="#aaa"/></svg></button>
            <button aria-label="置于对象之下"><svg viewBox="0 0 20 20"><path d="M7 9h11v8H7z" fill="#aaa"/><path d="M2 3h12v9H2z" fill="#fff"/></svg></button>
            <i class="hsep"></i>
            <button aria-label="注释前置"><svg viewBox="0 0 20 20"><text x="8" y="8" class="abc">ABC</text><path d="M16 4h2v5M5 10v5h9"/><path d="M19 13v5h-5z" fill="#111"/></svg></button>
            <button aria-label="填充后置"><svg viewBox="0 0 20 20"><path d="M2 3h11v9H2z" fill="#aaa"/><path d="M17 12V6M15 8l2-3 2 3"/></svg></button>
          </div>
        </div>
      </div>
      <div class="command"><i class="hgrip"></i><div class="line"></div></div>
    </div>
  </div>

  <form class="dialog">
    <div class="fields">
      <label for="qty">数量:</label>
      <div class="cell"><span class="box wide"><input id="qty" value="9"><span class="spin"><button type="button" aria-label="增加"><svg viewBox="0 0 10 6"><path d="M2 5l3-3 3 3"/></svg></button><button type="button" aria-label="减少"><svg viewBox="0 0 10 6"><path d="M2 1l3 3 3-3"/></svg></button></span></span></div>
      <label for="ox" class="spread"><span>X</span><span>偏</span><span>移:</span></label>
      <div class="cell"><span class="box"><input id="ox" value="0"></span>mm</div>

      <label for="len">柜长:</label>
      <div class="cell"><span class="box"><input id="len" value="800"></span>mm</div>
      <label for="oy" class="spread"><span>Y</span><span>偏</span><span>移:</span></label>
      <div class="cell"><span class="box"><input id="oy" value="0"></span>mm</div>

      <label for="thick">柜厚:</label>
      <div class="cell"><span class="box"><input id="thick" value="1500"></span>mm</div>
      <label for="lw" class="spread"><span>线</span><span>宽:</span></label>
      <div class="cell"><span class="box"><input id="lw" value="0.1"><span class="spin"><button type="button" aria-label="增加"><svg viewBox="0 0 10 6"><path d="M2 5l3-3 3 3"/></svg></button><button type="button" aria-label="减少"><svg viewBox="0 0 10 6"><path d="M2 1l3 3 3-3"/></svg></button></span></span>mm</div>

      <label for="high">柜高:</label>
      <div class="cell"><span class="box"><input id="high" value="2200"></span>mm</div>
    </div>
    <fieldset>
      <legend>编号</legend>
      <div class="fields inner">
        <label for="sort">排序:</label>
        <div class="cell"><span class="box wide"><select id="sort"><option>升序</option></select><span class="arrow"><svg viewBox="0 0 12 12"><path d="M2 4l4 4 4-4"/></svg></span></span></div>
        <label for="txt">编号文字:</label>
        <div class="cell"><span class="box"><input id="txt" value="AH"></span></div>

        <label for="fh">字高:</label>
        <div class="cell"><span class="box"><input id="fh" value="250"><span class="spin"><button type="button" aria-label="增加"><svg viewBox="0 0 10 6"><path d="M2 5l3-3 3 3"/></svg></button><button type="button" aria-label="减少"><svg viewBox="0 0 10 6"><path d="M2 1l3 3 3-3"/></svg></button></span></span>mm</div>
        <label for="ratio">字宽高比:</label>
        <div class="cell"><span class="box"><input id="ratio" value="0.6"><span class="spin"><button type="button" aria-label="增加"><svg viewBox="0 0 10 6"><path d="M2 5l3-3 3 3"/></svg></button><button type="button" aria-label="减少"><svg viewBox="0 0 10 6"><path d="M2 1l3 3 3-3"/></svg></button></span></span></div>

        <label class="check"><input type="checkbox" checked>显示编号文字</label>
        <label for="start">起始数字:</label>
        <div class="cell"><span class="box"><input id="start" value="1"></span></div>
      </div>
    </fieldset>
  </form>
</div>
</body>
</html>
```
FILE: styles.css
```css
* { box-sizing: border-box; }
body {
  margin: 0;
  font: 13px/16px "Liberation Sans", "Noto Sans CJK SC", sans-serif;
  color: #222;
  background: #646464;
}
button, input, select {
  margin: 0;
  padding: 0;
  border: 0;
  background: none;
  color: inherit;
  font: inherit;
  outline: 0;
  border-radius: 0;
}
select { appearance: none; opacity: 1; }
svg { display: block; fill: none; flex: none; }
ul { list-style: none; margin: 0; padding: 0; }

.app {
  position: relative;
  display: flex;
  flex-direction: column;
  height: 100vh;
  overflow: hidden;
}

/* menu bar */
.menubar {
  display: flex;
  justify-content: space-between;
  align-items: center;
  flex: none;
  height: 19px;
  padding: 0 3px 2px 259px;
  background: linear-gradient(#686868, #505050);
  color: #f2f2f2;
}
.menus { display: flex; gap: 25px; white-space: nowrap; }
.menus button:last-child { margin-left: -5px; }
.window-buttons { display: flex; gap: 6px; }
.window-buttons svg { width: 12px; height: 12px; stroke: #262626; }
.band { flex: none; height: 29px; background: linear-gradient(#a0a0a0, #8e8e8e); }

/* horizontal toolbars */
.toolrows {
  display: flex;
  flex-direction: column;
  flex: none;
  gap: 4px;
  padding: 6px 0;
  background: #606060;
}
.toolrow { display: flex; height: 24px; }
.bar { display: flex; align-items: center; flex: none; background: #efefef; overflow: hidden; }
.bar-standard { padding-left: 270px; }
.bar-layer { padding-left: 283px; }
.bar-grow { flex: 1 1 0; }
.bar button { display: flex; justify-content: center; flex: none; width: 24px; }
.bar button svg, .vbar svg, .bottombar svg { width: 20px; height: 20px; stroke: #555; stroke-width: 1.3; }
.bar button.drop { width: 12px; }
.bar button.drop svg { width: 8px; height: 8px; }
.sep { flex: none; width: 2px; height: 20px; margin: 0 3px; border-left: 1px solid #bbb; background: #fff; }
.grip {
  flex: none;
  width: 7px;
  margin: 1px 3px;
  background: repeating-linear-gradient(#777 0 1px, #444 1px 2px);
  border: 1px solid #4a4a4a;
}
.glyph-q { font: bold 14px "Liberation Sans", sans-serif; fill: #333; stroke: none; text-anchor: middle; }
.glyph-a, .glyph-text { font: bold 17px "Liberation Sans", sans-serif; fill: #444; stroke: none; text-anchor: middle; }
.glyph-text { font-size: 19px; }

.combo {
  display: flex;
  align-items: center;
  flex: none;
  height: 22px;
  background: #edead9;
  color: #9b998f;
  font: 11px/14px "Liberation Mono", monospace;
}
.combo select { flex: 1; min-width: 0; }
.combo > svg { stroke: #666; stroke-width: 1; width: 16px; height: 18px; }
.combo > svg:last-child {
  width: 18px;
  height: 20px;
  padding: 3px;
  background: #f1f0ec;
  stroke: #bbb;
  stroke-width: 2;
}
.combo-style { width: 127px; }
.combo-style select { text-align: center; padding-right: 18px; }
.combo-table { width: 60px; padding-left: 4px; }
.combo-layer { width: 317px; padding-left: 2px; gap: 2px; }
.combo-layer select { padding-left: 2px; }
.combo-color { width: 157px; padding-left: 6px; gap: 3px; }
.combo-line { width: 168px; padding-left: 5px; gap: 5px; }
.combo-weight { width: 80px; padding-left: 5px; gap: 5px; }
.swatch { width: 11px; height: 11px; border: 1px solid #111; background: #fff; }
.rule { width: 64px; height: 1px; background: #333; }
.combo-weight .rule { width: 37px; }

/* main area */
.body { display: flex; flex: 1; min-height: 0; }
.sidebar {
  flex: none;
  width: 105px;
  padding-top: 120px;
  border-left: 2px solid #777;
  border-right: 1px solid #444;
  background: #f1f1ef;
  overflow: hidden;
}
.sidebar ul { padding: 2px 0 3px; border-top: 2px solid #b8b8b4; }
.sidebar li { display: flex; align-items: center; gap: 4px; height: 19px; padding-left: 3px; line-height: 19px; }
.sidebar li svg { width: 18px; height: 16px; }
.sidebar ul.cream { background: #ece9d8; }
.sidebar ul.first { padding: 2px 0 0; }
.sidebar ul.last { margin-top: 4px; padding: 2px 0; }

.stage { display: flex; flex-direction: column; flex: 1; min-width: 0; }
.work { display: flex; flex: 1; min-height: 0; }
.vbar { display: flex; flex-direction: column; justify-content: space-between; align-items: center; background: #eee; overflow: hidden; }
.vbar button { display: block; flex: none; }
.vbar-draw { flex: none; width: 24px; margin: 0 7px 105px 5px; padding: 126px 0 1px; }

.center { display: flex; flex-direction: column; flex: 1; min-width: 0; margin-bottom: 8px; }
.view { display: flex; flex: 1; min-height: 0; }
.canvas { position: relative; flex: 1; background: #000; overflow: hidden; }
.drawing { position: absolute; left: 0; top: 0; }
.cab { font: 22px "Noto Sans Mono CJK SC", "DejaVu Sans Mono", monospace; fill: #1d8724; text-anchor: middle; }
.prompt { position: absolute; left: 103px; top: 195px; display: flex; align-items: flex-start; gap: 5px; }
.prompt span { display: flex; align-items: center; justify-content: space-between; width: 163px; height: 20px; padding: 0 3px 0 1px; background: #8f8f8f; color: #111; }
.prompt b { width: 11px; height: 11px; background: #fff; border: 1px solid #4747a5; font: bold 10px/9px "Liberation Mono", monospace; text-align: center; }
.prompt input { width: 42px; height: 16px; margin: 2px 1px 0 0; padding-left: 1px; background: #8f8f8f; font: 11px/14px "Liberation Mono", monospace; color: #222; }
.prompt input.active { color: #fff; background: linear-gradient(90deg, #3478cc 34px, #fff 34px); }
.ucs { position: absolute; left: 0; bottom: 0; }
.ucs text { font: 18px "Liberation Sans", sans-serif; fill: #aaa; text-anchor: middle; }
.cube { position: absolute; right: 11px; top: 7px; display: flex; flex-direction: column; align-items: center; gap: 14px; }
.cube text { font: 14px "Noto Sans CJK SC", sans-serif; fill: #aaa; text-anchor: middle; }
.cube text.top { font-size: 22px; fill: #66666a; }
.cube button { width: 50px; height: 17px; padding-left: 5px; border: 1px solid #aaa; border-radius: 4px; background: #89898d; color: #5a5a5e; font-size: 11px; line-height: 14px; text-align: left; }

/* scrollbars */
.vscroll { display: flex; flex-direction: column; flex: none; width: 20px; padding: 1px 2px 0 1px; background: #f8f8f6; }
.vscroll button, .hscroll button, .thumb {
  flex: none;
  width: 17px;
  height: 17px;
  padding: 2px;
  border: 1px solid #a8bce8;
  border-radius: 2px;
  background: #c8d6f8;
}
.vscroll svg, .hscroll svg { width: 11px; height: 11px; stroke: #465b88; stroke-width: 2.200; }
.thumb { background: repeating-linear-gradient(#bdcdf5 0 2px, #d5dffa 2px 4px); }
.space.a { flex: 250; }
.space.b { flex: 221; }
.space.c { flex: 173; }
.space.d { flex: 71; }

.tabs { display: flex; flex: none; height: 18px; margin-bottom: 5px; background: #ece9d8; }
.tabnav { display: flex; }
.tabnav button { width: 15px; padding: 2px 1px; border: 1px solid #c9c6b8; border-top: 0; }
.tabnav svg { width: 12px; height: 12px; fill: #b0ae9f; stroke: #b0ae9f; }
.tab { display: flex; align-items: center; width: 51px; padding-left: 4px; line-height: 18px; font-size: 12px; }
.tab svg { width: 8px; height: 18px; margin-left: 5px; stroke: #777; }
.tab.on { padding-left: 12px; color: #fff; font-size: 13px; font-weight: bold; background: #000; clip-path: polygon(0 0, 100% 0, 86% 100%, 12% 100%); }
.hscroll { display: flex; width: 321px; margin-left: auto; padding-right: 20px; background: linear-gradient(90deg, #fbfbf8 301px, #ece9d8 301px); }
.split { width: 6px; margin-right: 1px; border: 1px solid #aaa; background: #ece9d8; }
.hscroll .thumb { background: repeating-linear-gradient(90deg, #bdcdf5 0 2px, #d5dffa 2px 4px); }

.bottomrow { display: flex; flex: none; height: 24px; }
.bottomrow .grip { margin: 0 0 0 -1px; }
.bottombar { display: flex; align-items: center; flex: 1; min-width: 0; overflow: hidden; background: #eee; }
.group { display: flex; gap: 4px; padding-left: 3px; }
.group button { flex: none; }
.group.grow { flex: 1; justify-content: space-between; gap: 0; margin-right: -10px; padding-left: 3px; }
.bottombar .sep { margin: 0 3px 0 5px; }
.qmark { font: bold 11px "Liberation Sans", sans-serif; fill: #2531c5; stroke: none; text-anchor: middle; }
.zi { font: 13px "Noto Sans CJK SC", sans-serif; fill: #2a2ec4; stroke: none; text-anchor: middle; }
.abc { font: bold 8px "Liberation Mono", monospace; fill: #333; stroke: none; text-anchor: middle; }

.rightdock { display: flex; flex-direction: column; flex: none; width: 24px; margin: 0 3px 4px 6px; }
.hgrip { flex: none; height: 10px; border: 1px solid #444; background: repeating-linear-gradient(#777 0 1px, #444 1px 3px); }
.vbar-modify { flex: 1; }
.vbar-order { flex: none; height: 137px; padding-top: 2px; justify-content: flex-start; gap: 3px; }
.hsep { flex: none; width: 22px; height: 1px; background: #bbb; }

.command { display: flex; flex: none; height: 17px; }
.command .hgrip { width: 22px; height: 11px; margin: 2px 1px 0 5px; border: 0; background: repeating-linear-gradient(90deg, #999 0 1px, #666 1px 3px); }
.line { flex: 1; background: #c8c8c8; }

/* cabinet parameter dialog */
.dialog {
  position: absolute;
  left: 2px;
  top: 0;
  width: 277px;
  padding: 4px 10px 9px 14px;
  background: #ece9d8;
  border: solid #5d62b4;
  border-width: 0 3px 3px;
  color: #333;
}
.fields { display: grid; grid-template-columns: 36px 82px 58px 1fr; grid-auto-rows: 29px; align-items: center; white-space: nowrap; }
.cell { display: flex; align-items: center; gap: 1px; font: 11px/14px "Liberation Mono", monospace; }
.spread { display: flex; justify-content: space-between; padding-right: 7px; }
.spread span:first-child { font-family: "Liberation Mono", "Noto Sans CJK SC", monospace; }
.box { display: flex; width: 53px; height: 22px; border: 1px solid #8ea4c4; background: #fff; padding: 1px; }
.box.wide { width: 67px; }
.fields > .spread + .cell .box { width: 50px; }
.box input { flex: 1; min-width: 0; padding-left: 1px; font: 11px/16px "Liberation Mono", monospace; }
.box select { flex: 1; min-width: 0; padding-left: 2px; font: 13px/16px "Noto Sans CJK SC", sans-serif; }
.spin { display: flex; flex-direction: column; width: 16px; background: #cbd8f8; }
.spin button { flex: 1; display: grid; place-items: center; }
.spin svg { width: 10px; height: 6px; stroke: #4d6185; stroke-width: 2; }
.arrow { display: grid; place-items: center; width: 16px; background: #c5d3f6; }
.arrow svg { width: 12px; height: 12px; stroke: #465b88; stroke-width: 2; }
fieldset { min-width: 0; margin: 2px 0 0 1px; padding: 0 0 4px; border: 1px solid #d2cfbe; border-radius: 4px; }
legend { margin-left: 7px; padding: 0 1px; line-height: 12px; color: #2359b5; }
.inner { grid-template-columns: 34px 77px 63px 1fr; grid-auto-rows: 27px; }
.inner label + .cell:nth-child(4n) .box, .inner .cell:last-child .box { width: 50px; }
.check { grid-column: span 2; display: flex; align-items: center; gap: 4px; }
.check input {
  appearance: none;
  width: 14px;
  height: 14px;
  border: 1px solid #3c6a8b;
  background: #fff;
}
.check input::before { content: "✔"; display: block; font: 12px/12px "DejaVu Sans", sans-serif; color: #2a9b38; text-align: center; }
```
